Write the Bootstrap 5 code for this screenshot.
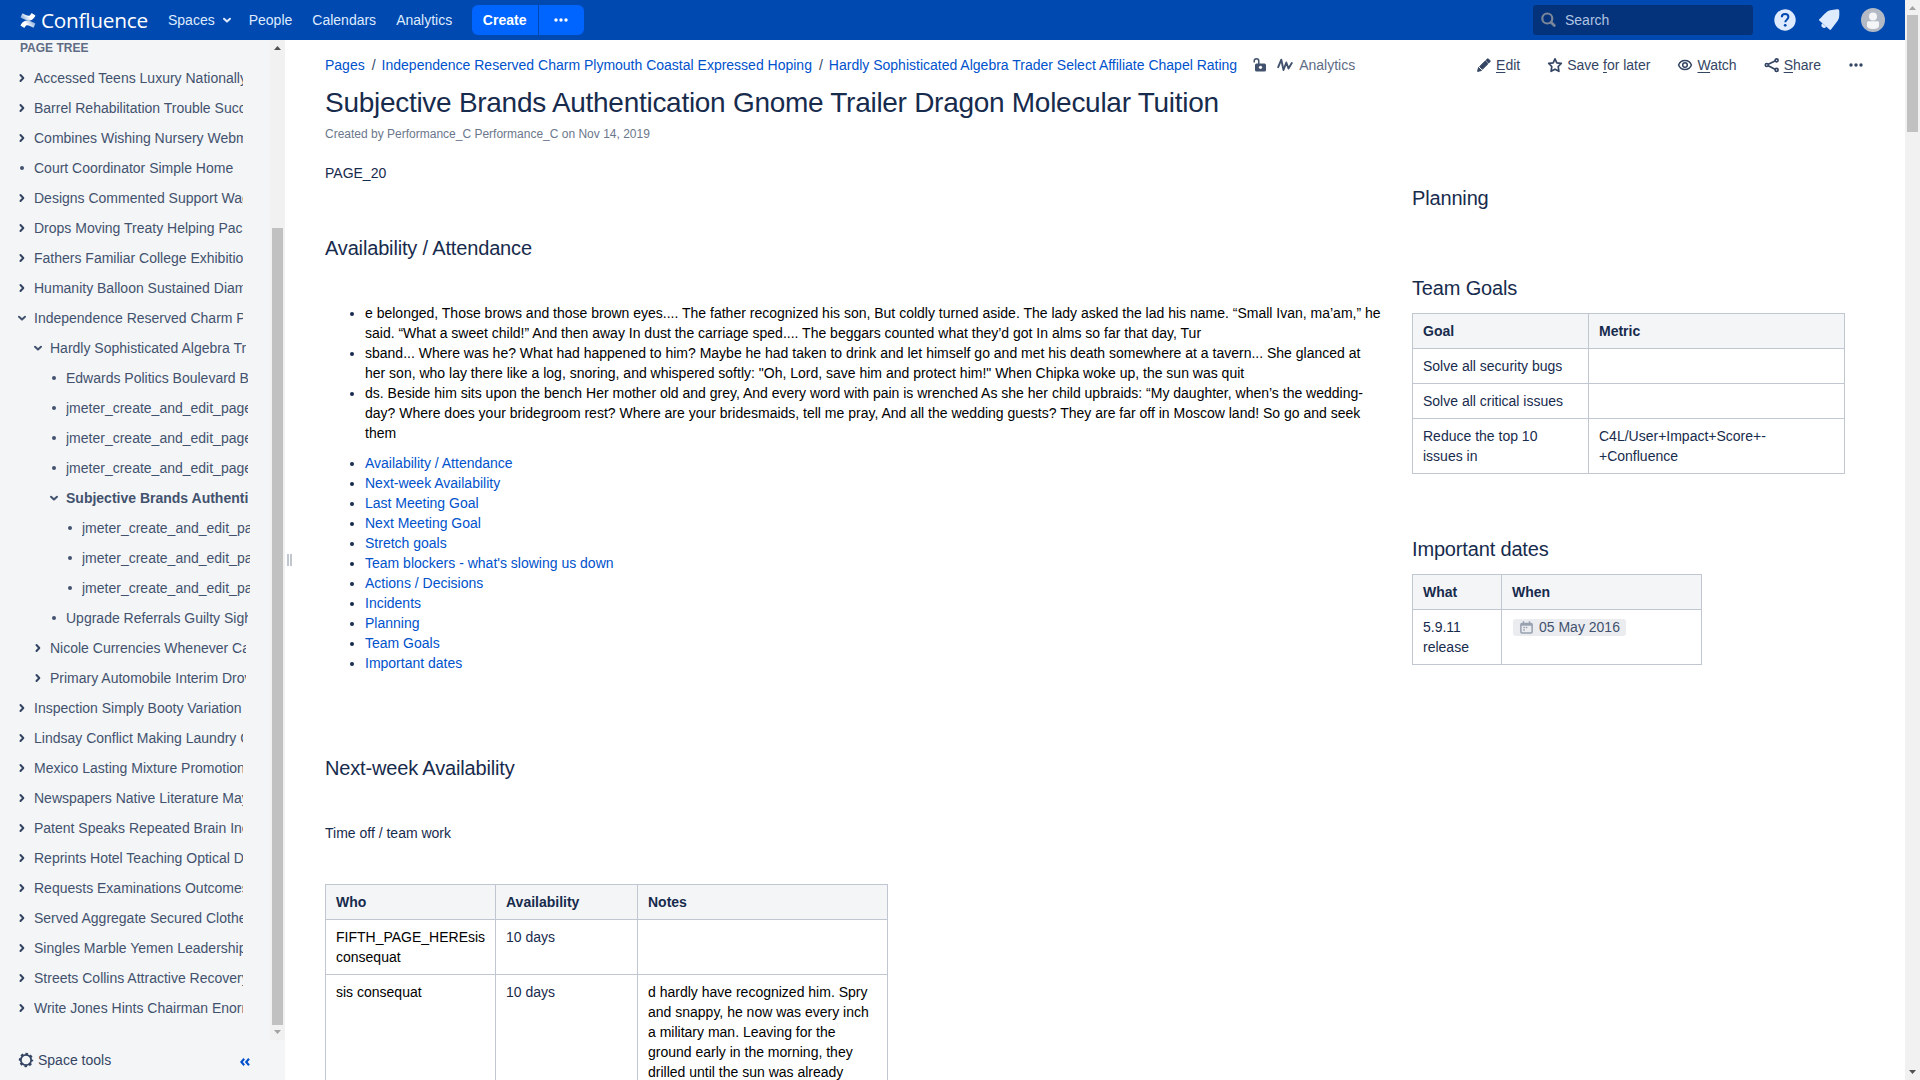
<!DOCTYPE html>
<html lang="en">
<head>
<meta charset="utf-8">
<title>Subjective Brands Authentication Gnome Trailer Dragon Molecular Tuition - Confluence</title>
<link href="https://cdn.jsdelivr.net/npm/bootstrap@5.3.0/dist/css/bootstrap.min.css" rel="stylesheet">
<style>
body{font:14px/20px "Liberation Sans",Arial,sans-serif;color:#172b4d;height:1080px;overflow:hidden;background:#fff}
a{color:#0052cc;text-decoration:none}
svg{display:block;flex:none}
.app{height:1080px}
.topbar{height:40px;flex:none;background:#0049b0;color:#deebff;padding:0 20px 0 20px}
.topbar a{color:#deebff}
.brand-name{font:20.8px/38px "Open Sans","Noto Sans",sans-serif;letter-spacing:-.25px;color:#fff;width:109px;margin-left:5px;white-space:nowrap}
.create-btn{background:#0065ff;color:#fff;height:30px;line-height:30px;font-weight:700}
.searchbox{width:220px;height:30px;background:#04337b;border-radius:3px;padding-left:8px;color:#b0c4e3}
.sidebar{width:285px;background:#f4f5f7;color:#42526e}
.tree-pane{height:1000px}
.tree-pane .tree{width:270px;padding-left:16px}
.tree-title{font-size:12px;line-height:16px;font-weight:700;color:#5e6c84;height:23px;padding-left:4px}
.node{height:30px}
.node svg{width:12px;height:12px;margin-right:6px}
.node span{overflow:hidden;white-space:nowrap;line-height:20px;width:209px}
.l2{padding-left:16px}.l2 span{width:196px}
.l3{padding-left:32px}.l3 span{width:182px}
.l4{padding-left:48px}.l4 span{width:168px}
.sbar{width:15px;background:#f1f1f1}
.sbar i{display:block;width:11px;background:#c1c1c1;margin:0 2px}
.grip{width:5px;height:12px;border:solid #c1c7d0;border-width:0 2px;margin:514px 0 0 2px}
.page{padding:0 0 0 33px}
.actionbar{height:20px;margin-top:15px;color:#344563}
.actionbar u{text-underline-offset:2px}
.page h1{font-size:28px;line-height:32px;letter-spacing:-.28px;font-weight:400;margin:12px 0 0}
.byline{font-size:12px;line-height:20px;color:#6b778c;margin-top:5px}
.page h2{font-size:20px;line-height:24px;letter-spacing:-.16px;font-weight:400;margin:0}
.maincol{width:1058px;padding-top:19px}
.sidecol{padding:42px 0 0 29px}
.page ul{padding-left:40px;margin:0}
.blk{color:#000}
.grid{border-collapse:collapse;table-layout:fixed}
.grid td,.grid th{border:1px solid #c1c7d0;padding:7px 10px;vertical-align:top}
.grid th{background:#f4f5f7}
.datechip{background:#ebecf0;color:#42526e;border-radius:3px;height:17px;line-height:17px;padding:0 6px 0 7px;margin:2px 0 0 1px}
</style>
<script src="https://cdn.jsdelivr.net/npm/bootstrap@5.3.0/dist/js/bootstrap.bundle.min.js"></script>
</head>
<body>
<svg width="0" height="0" class="position-absolute">
<symbol id="right" viewBox="0 0 12 12"><path d="M4.500 3 7.300 6 4.500 9" fill="none" stroke="#344563" stroke-width="2" stroke-linecap="round" stroke-linejoin="round"/></symbol>
<symbol id="down" viewBox="0 0 12 12"><path d="M3 4.800 6 7.600l3-2.800" fill="none" stroke="currentColor" stroke-width="2" stroke-linecap="round" stroke-linejoin="round"/></symbol>
<symbol id="dot" viewBox="0 0 12 12"><circle cx="6" cy="6" r="2" fill="#42526e"/></symbol>
<symbol id="dots" viewBox="0 0 14 14"><g fill="currentColor"><circle cx="2" cy="7" r="1.700"/><circle cx="7" cy="7" r="1.700"/><circle cx="12" cy="7" r="1.700"/></g></symbol>
</svg>
<div class="app d-flex">
<div class="flex-grow-1 d-flex flex-column">
<header class="topbar d-flex align-items-center">
  <svg width="16" height="15" viewBox="0 0 31 31"><defs><linearGradient id="g1" x1="1" y1="0" x2="0" y2=".4"><stop offset=".1" stop-color="#fff" stop-opacity=".5"/><stop offset=".7" stop-color="#fff"/></linearGradient></defs>
  <path id="wing" d="M1.260 23.400c-.330.540-.700 1.160-1 1.660a1 1 0 0 0 .340 1.360l6.600 4.060a1 1 0 0 0 1.400-.340c.260-.440.600-1 1-1.600 2.600-4.300 5.230-3.790 9.900-1.550l6.550 3.110a1 1 0 0 0 1.350-.490l3.150-7.120a1 1 0 0 0-.500-1.310c-1.380-.650-4.130-1.950-6.600-3.140C14.570 13.720 7 14 1.260 23.400z" fill="url(#g1)"/><use href="#wing" transform="rotate(180 15.400 15.600)"/></svg>
  <div class="brand-name">Confluence</div>
  <a class="d-flex align-items-center" href="#" style="margin-left:18px">Spaces<svg width="12" height="12" style="margin-left:6px"><use href="#down"/></svg></a>
  <a href="#" style="margin-left:16px">People</a>
  <a href="#" style="margin-left:20px">Calendars</a>
  <a href="#" style="margin-left:20px">Analytics</a>
  <div class="d-flex" style="margin-left:19.5px"><div class="create-btn rounded-start text-center" style="width:66px">Create</div><div class="create-btn rounded-end d-flex align-items-center justify-content-center" style="width:45px;margin-left:1px"><svg width="14" height="14"><use href="#dots"/></svg></div></div>
  <div class="searchbox d-flex align-items-center ms-auto"><svg width="16" height="16" viewBox="0 0 16 16" class="me-2"><g fill="none" stroke="#7a8699" stroke-width="2.200"><circle cx="6.300" cy="6.500" r="5"/><path d="m10 10.200 3.300 3.300" stroke-width="2.800" stroke-linecap="round"/></g></svg>Search</div>
  <svg width="22" height="22" viewBox="0 0 22 22" style="margin-left:21px"><circle cx="11" cy="11" r="10.700" fill="#deebff"/><path d="M7.800 8.300c0-2 1.400-3.200 3.300-3.200 1.900 0 3.300 1.200 3.300 3 0 2.600-3.200 2.600-3.200 5.200" fill="none" stroke="#0049b0" stroke-width="2"/><circle cx="11.200" cy="16.300" r="1.400" fill="#0049b0"/></svg>
  <svg width="22" height="22" viewBox="0 0 22 22" style="margin-left:22px"><path d="M1.300 10.300C7 5 9 1 14 1l5-.7c1.700 0 2.300.6 2.300 2v4c0 4-2 6-4.500 9.200L13 20.600c-.5.500-1 .5-1.500 0l-10.200-9c-.5-.4-.5-.9 0-1.300z" fill="#deebff"/><path d="m4.300 14.200 4 3.600c-1.200 1.500-2.800 1.500-4 .5s-1.200-2.700 0-4.100z" fill="#deebff"/></svg>
  <svg width="24" height="24" viewBox="0 0 24 24" style="margin-left:21px"><circle cx="12" cy="12" r="12" fill="#b3bac5"/><circle cx="12" cy="8.400" r="4" fill="#f4f5f7"/><path d="M6 15c0-1.200.6-1.700 1.700-1.700h8.600c1.100 0 1.700.5 1.700 1.700v2.700c0 2-2.500 3.300-6 3.300s-6-1.300-6-3.300z" fill="#f4f5f7"/></svg>
</header>
<div class="d-flex flex-grow-1 overflow-hidden">
<aside class="sidebar flex-shrink-0">
 <div class="tree-pane d-flex">
  <div class="tree">
   <div class="tree-title">PAGE TREE</div>
   <div class="node d-flex align-items-center"><svg><use href="#right"/></svg><span>Accessed Teens Luxury Nationally</span></div>
   <div class="node d-flex align-items-center"><svg><use href="#right"/></svg><span>Barrel Rehabilitation Trouble Succ</span></div>
   <div class="node d-flex align-items-center"><svg><use href="#right"/></svg><span>Combines Wishing Nursery Webm</span></div>
   <div class="node d-flex align-items-center"><svg><use href="#dot"/></svg><span>Court Coordinator Simple Home</span></div>
   <div class="node d-flex align-items-center"><svg><use href="#right"/></svg><span>Designs Commented Support Wag</span></div>
   <div class="node d-flex align-items-center"><svg><use href="#right"/></svg><span>Drops Moving Treaty Helping Pac</span></div>
   <div class="node d-flex align-items-center"><svg><use href="#right"/></svg><span>Fathers Familiar College Exhibition</span></div>
   <div class="node d-flex align-items-center"><svg><use href="#right"/></svg><span>Humanity Balloon Sustained Diam</span></div>
   <div class="node d-flex align-items-center"><svg><use href="#down"/></svg><span>Independence Reserved Charm Plymouth</span></div>
   <div class="node l2 d-flex align-items-center"><svg><use href="#down"/></svg><span>Hardly Sophisticated Algebra Trader</span></div>
   <div class="node l3 d-flex align-items-center"><svg><use href="#dot"/></svg><span>Edwards Politics Boulevard B</span></div>
   <div class="node l3 d-flex align-items-center"><svg><use href="#dot"/></svg><span>jmeter_create_and_edit_page</span></div>
   <div class="node l3 d-flex align-items-center"><svg><use href="#dot"/></svg><span>jmeter_create_and_edit_page</span></div>
   <div class="node l3 d-flex align-items-center"><svg><use href="#dot"/></svg><span>jmeter_create_and_edit_page</span></div>
   <div class="node l3 d-flex align-items-center"><svg><use href="#down"/></svg><span class="fw-bold">Subjective Brands Authentication</span></div>
   <div class="node l4 d-flex align-items-center"><svg><use href="#dot"/></svg><span>jmeter_create_and_edit_page</span></div>
   <div class="node l4 d-flex align-items-center"><svg><use href="#dot"/></svg><span>jmeter_create_and_edit_page</span></div>
   <div class="node l4 d-flex align-items-center"><svg><use href="#dot"/></svg><span>jmeter_create_and_edit_page</span></div>
   <div class="node l3 d-flex align-items-center"><svg><use href="#dot"/></svg><span>Upgrade Referrals Guilty Sight</span></div>
   <div class="node l2 d-flex align-items-center"><svg><use href="#right"/></svg><span>Nicole Currencies Whenever Car</span></div>
   <div class="node l2 d-flex align-items-center"><svg><use href="#right"/></svg><span>Primary Automobile Interim Drove</span></div>
   <div class="node d-flex align-items-center"><svg><use href="#right"/></svg><span>Inspection Simply Booty Variation</span></div>
   <div class="node d-flex align-items-center"><svg><use href="#right"/></svg><span>Lindsay Conflict Making Laundry C</span></div>
   <div class="node d-flex align-items-center"><svg><use href="#right"/></svg><span>Mexico Lasting Mixture Promotion</span></div>
   <div class="node d-flex align-items-center"><svg><use href="#right"/></svg><span>Newspapers Native Literature May</span></div>
   <div class="node d-flex align-items-center"><svg><use href="#right"/></svg><span>Patent Speaks Repeated Brain Inc</span></div>
   <div class="node d-flex align-items-center"><svg><use href="#right"/></svg><span>Reprints Hotel Teaching Optical D</span></div>
   <div class="node d-flex align-items-center"><svg><use href="#right"/></svg><span>Requests Examinations Outcomes</span></div>
   <div class="node d-flex align-items-center"><svg><use href="#right"/></svg><span>Served Aggregate Secured Clothes</span></div>
   <div class="node d-flex align-items-center"><svg><use href="#right"/></svg><span>Singles Marble Yemen Leadership</span></div>
   <div class="node d-flex align-items-center"><svg><use href="#right"/></svg><span>Streets Collins Attractive Recovery</span></div>
   <div class="node d-flex align-items-center"><svg><use href="#right"/></svg><span>Write Jones Hints Chairman Enorm</span></div>
  </div>
  <div class="sbar d-flex flex-column"><svg width="15" height="15"><path d="M4 10l3.500-4 3.500 4z" fill="#505050"/></svg><i style="height:797px;margin-top:173px"></i><svg width="15" height="15"><path d="M4 5l3.500 4L11 5z" fill="#a3a3a3"/></svg></div>
 </div>
 <div class="d-flex align-items-center" style="height:40px;padding:0 35px 0 18px"><svg width="16" height="16" viewBox="0 0 16 16"><circle cx="8" cy="8" r="6" fill="none" stroke="#344563" stroke-width="2.400" stroke-dasharray="2.500 2.212" stroke-dashoffset="1.250"/><circle cx="8" cy="8" r="5.200" fill="none" stroke="#344563" stroke-width="1.800"/></svg><span style="margin-left:4px;color:#344563">Space tools</span><svg class="ms-auto" width="10" height="10" viewBox="0 0 10 10" style="margin-top:4px"><path d="M4.200 1.800 1.400 5l2.800 3.200M9 1.800 6.200 5 9 8.200" fill="none" stroke="#0052cc" stroke-width="2.100"/></svg></div>
</aside>
<div class="grip flex-shrink-0"></div>
<main class="page flex-grow-1">
 <div class="actionbar d-flex align-items-center">
  <a href="#">Pages</a><span style="margin:0 6px 0 7px">/</span><a href="#">Independence Reserved Charm Plymouth Coastal Expressed Hoping</a><span style="margin:0 6px 0 7px">/</span><a href="#">Hardly Sophisticated Algebra Trader Select Affiliate Chapel Rating</a>
  <svg width="14" height="16" viewBox="0 0 14 16" style="margin-left:16px"><rect x="2" y="6.500" width="11" height="8" rx="1.500" fill="#42526e"/><path d="M1.200 5.500V4c0-3 4.600-3 4.600 0v3" fill="none" stroke="#42526e" stroke-width="1.500"/><circle cx="7.500" cy="10.300" r="1.600" fill="#fff"/></svg>
  <svg width="16" height="14" viewBox="0 0 16 14" style="margin-left:10px"><path d="M1.200 9.200 4.300 1.700 6.500 12 9.300 4.500 11.500 10.500 14.800 5" fill="none" stroke="#42526e" stroke-width="1.900" stroke-linecap="round" stroke-linejoin="round"/></svg>
  <span style="margin-left:6px;color:#5e6c84">Analytics</span>
  <div class="ms-auto d-flex align-items-center" style="margin-right:42px">
   <svg width="16" height="16" viewBox="0 0 16 16"><path d="m1.600 14.400.9-3.900 3 3z" fill="#344563" stroke="#344563" stroke-width="1" stroke-linejoin="round"/><path d="m3.700 9.600 5.500-5.500 2.700 2.700-5.500 5.500zM9.900 3.400l1.300-1.300c.4-.4.900-.4 1.300 0l1.400 1.400c.4.400.4.900 0 1.300l-1.300 1.300z" fill="#344563" stroke="#344563"/></svg><span style="margin-left:4px"><u>E</u>dit</span>
   <svg width="16" height="16" viewBox="0 0 16 16" style="margin-left:27px"><path d="m8 1.800 1.800 4 4.500.5-3.100 3.200.7 4.800L8 12.200l-3.900 2.100.7-4.800-3.100-3.200 4.500-.5z" fill="none" stroke="#344563" stroke-width="1.700" stroke-linejoin="round"/></svg><span style="margin-left:4px">Save <u>f</u>or later</span>
   <svg width="16" height="16" viewBox="0 0 16 16" style="margin-left:27px"><g fill="none" stroke="#344563" stroke-width="1.500"><path d="M1.600 8C3.800 1.900 12.200 1.900 14.400 8 12.200 14.100 3.800 14.100 1.600 8z"/><circle cx="8" cy="8" r="2.300"/></g></svg><span style="margin-left:4px"><u>W</u>atch</span>
   <svg width="16" height="16" viewBox="0 0 16 16" style="margin-left:27px"><g fill="none" stroke="#344563" stroke-width="1.700"><path d="m4.300 7.200 6.700-3.200M4.300 8.800l6.700 3.400"/><circle cx="2.800" cy="8" r="1.500"/><circle cx="12.600" cy="3.300" r="1.500"/><circle cx="12.600" cy="12.900" r="1.500"/></g></svg><span style="margin-left:4px"><u>S</u>hare</span>
   <svg width="14" height="14" style="margin-left:28px"><use href="#dots"/></svg>
  </div>
 </div>
 <h1>Subjective Brands Authentication Gnome Trailer Dragon Molecular Tuition</h1>
 <div class="byline">Created by Performance_C Performance_C on Nov 14, 2019</div>
 <div class="d-flex">
  <div class="maincol flex-shrink-0">
   <p class="mb-0">PAGE_20</p>
   <h2 style="margin-top:53px">Availability / Attendance</h2>
   <ul style="margin-top:43px"><li><span class="blk">e belonged, Those brows and those brown eyes.... The father recognized his son, But coldly turned aside. The lady asked the lad his name. “Small Ivan, ma’am,” he said. “What a sweet child!” And then away In dust the carriage sped.... The beggars counted what they’d got In alms so far that day, Tur</span></li><li><span class="blk">sband... Where was he? What had happened to him? Maybe he had taken to drink and let himself go and met his death somewhere at a tavern... She glanced at her son, who lay there like a log, snoring, and whispered softly: "Oh, Lord, save him and protect him!" When Chipka woke up, the sun was quit</span></li><li><span class="blk">ds. Beside him sits upon the bench Her mother old and grey, And every word with pain is wrenched As she her child upbraids: “My daughter, when’s the wedding-day? Where does your bridegroom rest? Where are your bridesmaids, tell me pray, And all the wedding guests? They are far off in Moscow land! So go and seek them</span></li></ul>
   <ul style="margin-top:10px"><li><a href="#">Availability / Attendance</a></li><li><a href="#">Next-week Availability</a></li><li><a href="#">Last Meeting Goal</a></li><li><a href="#">Next Meeting Goal</a></li><li><a href="#">Stretch goals</a></li><li><a href="#">Team blockers - what's slowing us down</a></li><li><a href="#">Actions / Decisions</a></li><li><a href="#">Incidents</a></li><li><a href="#">Planning</a></li><li><a href="#">Team Goals</a></li><li><a href="#">Important dates</a></li></ul>
   <h2 style="margin-top:83px">Next-week Availability</h2>
   <p class="mb-0" style="margin-top:43px">Time off / team work</p>
   <table class="grid" style="width:563px;margin-top:41px"><colgroup><col style="width:170px"><col style="width:142px"><col style="width:250px"></colgroup>
    <tr><th>Who</th><th>Availability</th><th>Notes</th></tr>
    <tr><td class="blk">FIFTH_PAGE_HEREsis consequat</td><td>10 days</td><td></td></tr>
    <tr style="height:160px"><td class="blk">sis consequat</td><td>10 days</td><td class="blk">d hardly have recognized him. Spry and snappy, he now was every inch a military man. Leaving for the ground early in the morning, they drilled until the sun was already</td></tr>
   </table>
  </div>
  <div class="sidecol">
   <h2>Planning</h2>
   <h2 style="margin-top:66px">Team Goals</h2>
   <table class="grid" style="width:433px;margin-top:13px"><colgroup><col style="width:176px"><col style="width:256px"></colgroup>
    <tr><th>Goal</th><th>Metric</th></tr><tr><td>Solve all security bugs</td><td></td></tr><tr><td>Solve all critical issues</td><td></td></tr><tr><td>Reduce the top 10 issues in</td><td>C4L/User+Impact+Score+-<br>+Confluence</td></tr>
   </table>
   <h2 style="margin-top:63px">Important dates</h2>
   <table class="grid" style="width:290px;margin-top:13px"><colgroup><col style="width:89px"><col style="width:200px"></colgroup>
    <tr><th>What</th><th>When</th></tr>
    <tr><td>5.9.11 release</td><td><div class="d-flex"><span class="datechip d-flex align-items-center"><svg width="13" height="13" viewBox="0 0 13 13" style="margin-right:6px"><g fill="none" stroke="#97a0af"><rect x=".9" y="2.400" width="11.200" height="9.700" rx="1" stroke-width="1.500"/><path d="M1 3.700h11" stroke-width="2"/><path d="M3.500.3v2.400M9.500.3v2.400" stroke-width="1.500"/><path d="M3.300 6.500h1.500M5.800 6.500h1.500M3.300 9h1.500" stroke-width="1.400"/></g></svg>05 May 2016</span></div></td></tr>
   </table>
  </div>
 </div>
</main>
</div>
</div>
<div class="sbar flex-shrink-0 d-flex flex-column"><svg width="15" height="15"><path d="M4 10l3.500-4 3.500 4z" fill="#a3a3a3"/></svg><i style="height:117px"></i><svg class="mt-auto" width="15" height="15"><path d="M4 5l3.500 4L11 5z" fill="#505050"/></svg></div>
</div>
</body>
</html>
